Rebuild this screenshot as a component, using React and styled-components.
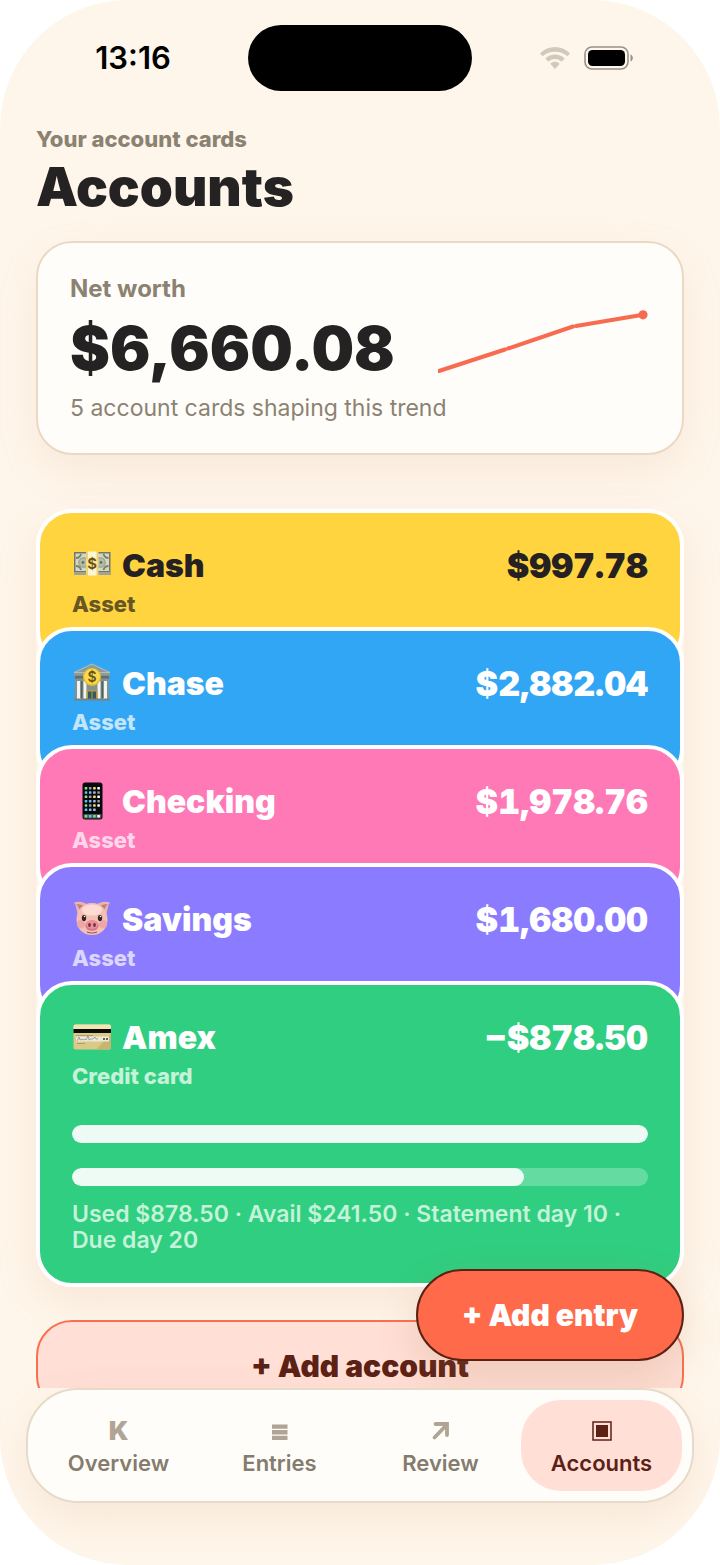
import React from "react";
import styled, { createGlobalStyle } from "styled-components";

const accounts = [
  { name: "Cash", kind: "Asset", balance: "$997.78", color: "#ffd43f", ink: "#252122", soft: "#665724", Icon: BanknoteIcon },
  { name: "Chase", kind: "Asset", balance: "$2,882.04", color: "#31a6f5", ink: "#ffffff", soft: "#c3e5fc", Icon: BankIcon },
  { name: "Checking", kind: "Asset", balance: "$1,978.76", color: "#ff79b7", ink: "#ffffff", soft: "#ffd5e9", Icon: PhoneIcon },
  { name: "Savings", kind: "Asset", balance: "$1,680.00", color: "#8b7bff", ink: "#ffffff", soft: "#dbd6ff", Icon: PigIcon },
  {
    name: "Amex",
    kind: "Credit card",
    balance: "−$878.50",
    color: "#30ce80",
    ink: "#ffffff",
    soft: "#c4f3da",
    Icon: CreditCardIcon,
    meters: [
      { label: "Statement paid", value: 100 },
      { label: "Credit used", value: 78.4 },
    ],
    note: "Used $878.50 · Avail $241.50 · Statement day 10 · Due day 20",
  },
];

const tabs = [
  { name: "Overview", Icon: OverviewIcon },
  { name: "Entries", Icon: EntriesIcon },
  { name: "Review", Icon: ReviewIcon },
  { name: "Accounts", Icon: AccountsIcon },
];

export default function App() {
  return (
    <>
      <GlobalStyle />
      <Phone>
        <StatusBar>
          <Clock>13:16</Clock>
          <Island />
          <Indicators>
            <WifiIcon />
            <BatteryIcon />
          </Indicators>
        </StatusBar>
        <Main>
          <Scroll>
            <header>
              <Eyebrow>Your account cards</Eyebrow>
              <Title>Accounts</Title>
            </header>
            <NetWorth>
              <NetLabel>Net worth</NetLabel>
              <NetRow>
                <NetAmount>$6,660.08</NetAmount>
                <Sparkline />
              </NetRow>
              <NetNote>5 account cards shaping this trend</NetNote>
            </NetWorth>
            <Stack>
              {accounts.map((account, i) => (
                <AccountCard key={account.name} account={account} covered={i < accounts.length - 1} />
              ))}
            </Stack>
            <AddAccount type="button">+ Add account</AddAccount>
          </Scroll>
          <AddEntry type="button">+ Add entry</AddEntry>
        </Main>
        <TabBar>
          {tabs.map(({ name, Icon }) => (
            <Tab key={name} href={`#${name.toLowerCase()}`} $active={name === "Accounts"}>
              <Icon />
              <span>{name}</span>
            </Tab>
          ))}
        </TabBar>
      </Phone>
    </>
  );
}

function AccountCard({ account, covered }) {
  const { name, kind, balance, color, ink, soft, Icon, meters, note } = account;
  return (
    <Card $color={color} $ink={ink} $covered={covered}>
      <CardHead>
        <Icon />
        <CardName>{name}</CardName>
        <Balance>{balance}</Balance>
      </CardHead>
      <Kind $soft={soft}>{kind}</Kind>
      {meters && (
        <Meters>
          {meters.map(({ label, value }) => (
            <Track key={label} role="progressbar" aria-label={label} aria-valuenow={value}>
              <Fill style={{ width: `${value}%` }} />
            </Track>
          ))}
        </Meters>
      )}
      {note && <Note $soft={soft}>{note}</Note>}
    </Card>
  );
}

/* status icons */

function WifiIcon() {
  return (
    <svg width="30" height="22" viewBox="0 0 30 22" fill="#d2c9bd" aria-hidden="true">
      <path d="M15 0C9.300 0 4.200 2.200.4 5.900c-.4.4-.4.9 0 1.200l1.700 1.700c.3.4.8.4 1.200 0C6.300 6 10.400 4.800 15 4.800S23.700 6 26.700 8.800c.4.4.9.4 1.200 0l1.700-1.700c.4-.3.4-.8 0-1.200C25.800 2.200 20.700 0 15 0z" />
      <path d="M15 7.500c-3.500 0-6.700 1.300-9.200 3.600-.4.300-.4.800 0 1.200l2.200 2c.3.400.8.400 1.200 0 1.600-1.500 3.400-2.200 5.800-2.200s4.200.7 5.800 2.200c.4.400.9.400 1.200 0l2.200-2c.4-.4.4-.9 0-1.200-2.500-2.300-5.700-3.600-9.200-3.600z" />
      <path d="M15 14.800c-1.600 0-3 .5-4.100 1.500-.4.300-.4.800 0 1.200l3.500 4c.4.400.8.400 1.200 0l3.500-4c.4-.4.4-.9 0-1.200-1.100-1-2.500-1.500-4.100-1.500z" />
    </svg>
  );
}

function BatteryIcon() {
  return (
    <svg width="50" height="24" viewBox="0 0 50 24" aria-hidden="true">
      <rect x="1" y="1" width="43" height="22" rx="7" fill="none" stroke="#96918b" strokeWidth="1.600" />
      <rect x="4" y="4" width="37" height="16" rx="4.500" />
      <path d="M46.500 8.500c1.500.6 2.300 1.900 2.300 3.500s-.8 2.900-2.300 3.500z" fill="#96918b" />
    </svg>
  );
}

/* net worth trend over the last four periods */

function Sparkline() {
  return (
    <svg width="212" height="76" viewBox="0 0 212 76" role="img" aria-label="Net worth trend">
      <g stroke="#f76c50" strokeWidth="4" strokeLinecap="round">
        <path d="M1 61L67 39.500" />
        <path d="M70 38.500L135 16.500" />
        <path d="M138 16L205 4.800" />
      </g>
      <circle cx="205" cy="4.800" r="4.600" fill="#f76c50" />
    </svg>
  );
}

/* account icons */

function BanknoteIcon() {
  return (
    <svg width="40" height="40" viewBox="0 0 40 40" aria-hidden="true">
      <rect x="2" y="7" width="36.500" height="23" fill="#73786a" />
      <rect x="2" y="27" width="36.500" height="3" fill="#a3a394" />
      <rect x="3.500" y="8.500" width="33.500" height="17.500" fill="#d5d8bf" />
      <path d="M4 13q4 0 5-4M4 21q4 0 5 4M36.500 13q-4 0-5-4M36.500 21q-4 0-5 4" stroke="#787e70" strokeWidth="1.800" fill="none" />
      <circle cx="11.500" cy="17.500" r="4.800" fill="#b3bca4" stroke="#858b77" strokeWidth=".8" />
      <circle cx="28.500" cy="17.500" r="4.800" fill="#b3bca4" stroke="#858b77" strokeWidth=".8" />
      <circle cx="11" cy="17.500" r="1.400" fill="#657462" />
      <circle cx="29" cy="17.500" r="1.400" fill="#657462" />
      <rect x="14" y="6.500" width="12.500" height="24" fill="#efd276" />
      <rect x="16" y="6.500" width="8.500" height="24" fill="#fff5cf" />
      <circle cx="20.200" cy="18" r="6" fill="#f9e48c" />
      <text x="20.200" y="23.500" textAnchor="middle" fontFamily="Inter, sans-serif" fontSize="15" fontWeight="600" fill="#66501a">$</text>
    </svg>
  );
}

function BankIcon() {
  return (
    <svg width="40" height="40" viewBox="0 0 40 40" aria-hidden="true">
      <path d="M20 1L38 9.500V13H2V9.500z" fill="#8e9c98" />
      <path d="M20 1L38 9.500H2z" fill="none" stroke="#b5bfb9" strokeWidth="1" />
      <rect x="3" y="12" width="34" height="25" fill="#83928e" />
      <rect x="3" y="13" width="34" height="2.500" fill="#5f716f" />
      <g fill="#f1f4f2">
        <rect x="5" y="18" width="3.500" height="18" />
        <rect x="11.500" y="18" width="3" height="18" />
        <rect x="25.500" y="18" width="3" height="18" />
        <rect x="31.500" y="18" width="3.500" height="18" />
      </g>
      <path d="M8.500 18h2v17h-2zM29.500 18h2v17h-2z" fill="#52625f" />
      <rect x="14.500" y="27" width="11" height="10" fill="#b69b4a" />
      <path d="M16 28.500h3.500V37H16zM20.500 28.500H24V37h-3.500z" fill="#345b61" />
      <rect x="2" y="35.500" width="36" height="2" fill="#76827a" />
      <circle cx="20" cy="14" r="9" fill="#e9bd29" />
      <circle cx="20" cy="13.500" r="7.800" fill="#fbd94c" />
      <text x="20" y="18.500" textAnchor="middle" fontFamily="Inter, sans-serif" fontSize="14" fontWeight="600" fill="#69551e">$</text>
    </svg>
  );
}

function PhoneIcon() {
  const dots = ["#8ee28a", "#ffffff", "#a7b9dd", "#969da7", "#54c8f0", "#9297a1", "#ffd67b", "#65c7f4"];
  return (
    <svg width="40" height="40" viewBox="0 0 40 40" aria-hidden="true">
      <rect x="10.500" y="1.500" width="20" height="37" rx="2.500" fill="#08090b" />
      {Array.from({ length: 23 }, (_, i) => (
        <rect key={i} x={12.700 + (i % 4) * 4.200} y={6 + Math.floor(i / 4) * 4.300} width="2.600" height="2.500" rx=".6" fill={dots[(i * 3) % 8]} />
      ))}
      <rect x="11.500" y="33" width="18" height="4.500" rx="1" fill="#4c555c" />
      {["#78e282", "#54c8f0", "#7be184", "#ffffff"].map((fill, i) => (
        <rect key={i} x={12.700 + i * 4.200} y="34" width="2.600" height="2.600" rx=".6" fill={fill} />
      ))}
    </svg>
  );
}

function PigIcon() {
  return (
    <svg width="40" height="40" viewBox="0 0 40 40" aria-hidden="true">
      <path d="M2 3.500c5-1.500 11-.5 14 3L7 17C4 13 5 7 2 3.500zM38 3.500c-5-1.500-11-.5-14 3L33 17c3-4 2-10 5-13.500z" fill="#edb3ad" />
      <path d="M4 5c4 0 7 1 9 3l-5 5c-1-3-1-6-4-8zM36 5c-4 0-7 1-9 3l5 5c1-3 1-6 4-8z" fill="#bd817d" />
      <path d="M20 4c9.500 0 15.500 7 15.500 16.500S29 36 20 36 4.500 30 4.500 20.500 10.500 4 20 4z" fill="#f4bfb4" />
      <ellipse cx="20" cy="11" rx="10" ry="5.500" fill="#ffdcd1" />
      <circle cx="9" cy="25" r="4" fill="#efa6a5" />
      <circle cx="31" cy="25" r="4" fill="#efa6a5" />
      <ellipse cx="12" cy="19" rx="2.200" ry="3.100" fill="#2d251d" />
      <ellipse cx="28" cy="19" rx="2.200" ry="3.100" fill="#2d251d" />
      <circle cx="12.500" cy="17.500" r=".8" fill="#ffffff" />
      <circle cx="28.500" cy="17.500" r=".8" fill="#ffffff" />
      <ellipse cx="20" cy="26.500" rx="6.700" ry="5.200" fill="#da7583" />
      <ellipse cx="20" cy="25.500" rx="6" ry="4.200" fill="#ea929a" />
      <ellipse cx="17.500" cy="26" rx="1.400" ry="2.100" fill="#73303d" />
      <ellipse cx="22.500" cy="26" rx="1.400" ry="2.100" fill="#73303d" />
      <path d="M15 33q5 2 10 0" stroke="#99565c" strokeWidth="1.200" fill="none" />
    </svg>
  );
}

function CreditCardIcon() {
  return (
    <svg width="40" height="40" viewBox="0 0 40 40" aria-hidden="true">
      <rect x="1.500" y="7.500" width="37.500" height="25" rx="2" fill="#dac989" />
      <path d="M1.500 9.500q0-2 2-2H37q2 0 2 2V12H1.500z" fill="#f0e5b5" />
      <rect x="1.500" y="12" width="37.500" height="4" fill="#0b0b0a" />
      <path d="M24 32.500L39 17v13.500q0 2-2 2z" fill="#c7b66f" />
      <rect x="4" y="19.500" width="33" height="5" fill="#eee8d2" />
      <path d="M5 24l2-4 1 3 2-1 1 1 2-1 1 1 2-4 1 4 2-1 2 0 2-2 1 2 2 0" stroke="#7b80ad" strokeWidth=".7" fill="none" />
      <path d="M31 22h2M34 22h2" stroke="#313345" strokeWidth="1.600" />
      <path d="M4 18.500h17M5 26.500h8" stroke="#9e925d" strokeWidth=".8" />
    </svg>
  );
}

/* tab icons */

function OverviewIcon() {
  return <KMark aria-hidden="true">K</KMark>;
}

function EntriesIcon() {
  return (
    <svg width="24" height="26" viewBox="0 0 24 26" fill="currentColor" aria-hidden="true">
      <path d="M4 6.500h15.500v4.300H4zM4 12.100h15.500v4.300H4zM4 17.700h15.500V22H4z" />
    </svg>
  );
}

function ReviewIcon() {
  return (
    <svg width="24" height="26" viewBox="0 0 24 26" fill="none" stroke="currentColor" strokeWidth="3.800" strokeLinecap="round" aria-hidden="true">
      <path d="M5.500 19.500L17.500 7" />
      <path d="M6.500 6H18v11" />
    </svg>
  );
}

function AccountsIcon() {
  return (
    <svg width="24" height="26" viewBox="0 0 24 26" aria-hidden="true">
      <rect x="3" y="4" width="18" height="18" fill="none" stroke="currentColor" strokeWidth="1.500" />
      <rect x="6" y="7" width="12" height="12" fill="currentColor" />
    </svg>
  );
}

const GlobalStyle = createGlobalStyle`
  *, *::before, *::after {
    box-sizing: border-box;
  }
  body {
    margin: 0;
    background: #ffffff;
    color: #252223;
    font-family: Inter, "Liberation Sans", sans-serif;
  }
  h1, p {
    margin: 0;
  }
  button {
    font-family: inherit;
    cursor: pointer;
  }
  svg {
    display: block;
    flex: none;
  }
`;

const Phone = styled.div`
  display: flex;
  flex-direction: column;
  height: 100vh;
  overflow: hidden;
  border-radius: 128px;
  background: #fff6eb;
`;

const StatusBar = styled.div`
  display: grid;
  grid-template-columns: 1fr 224px 1fr;
  align-items: center;
  padding-top: 25px;
`;

const Clock = styled.time`
  padding-left: 18px;
  color: #000000;
  font-size: 31px;
  font-weight: 600;
  line-height: 36px;
  text-align: center;
`;

const Island = styled.div`
  height: 66px;
  border-radius: 33px;
  background: #000000;
`;

const Indicators = styled.div`
  display: flex;
  align-items: center;
  justify-content: center;
  gap: 14px;
  padding-right: 18px;
`;

const Main = styled.main`
  position: relative;
  flex: 1;
  min-height: 0;
`;

const Scroll = styled.div`
  height: 100%;
  overflow: hidden;
  padding: 34px 36px 0;
`;

const Eyebrow = styled.p`
  color: #8c8272;
  font-size: 22px;
  font-weight: 800;
  line-height: 28px;
`;

const Title = styled.h1`
  margin-top: 4px;
  font-size: 53px;
  font-weight: 900;
  line-height: 60px;
`;

const NetWorth = styled.section`
  margin-top: 24px;
  padding: 32px 32px 30px;
  border: 2px solid #ead9c3;
  border-radius: 36px;
  background: #fffdf9;
  box-shadow: 0 16px 44px rgba(190, 120, 70, 0.1);
`;

const NetLabel = styled.p`
  color: #8c8272;
  font-size: 24px;
  font-weight: 700;
  line-height: 28px;
`;

const NetRow = styled.div`
  display: flex;
  align-items: center;
  justify-content: space-between;
  height: 90px;
`;

const NetAmount = styled.p`
  font-size: 60px;
  font-weight: 900;
  line-height: 72px;
`;

const NetNote = styled.p`
  color: #8c8272;
  font-size: 23px;
  line-height: 30px;
`;

const Stack = styled.section`
  margin-top: 54px;
  border-radius: 36px;
  box-shadow: 0 16px 44px rgba(190, 120, 70, 0.12);
`;

const Card = styled.article`
  position: relative;
  margin-bottom: ${({ $covered }) => ($covered ? "-40px" : "0")};
  padding: 32px 32px ${({ $covered }) => ($covered ? "45px" : "30px")};
  border: 4px solid #ffffff;
  border-radius: 36px;
  background: ${({ $color }) => $color};
  color: ${({ $ink }) => $ink};
`;

const CardHead = styled.div`
  display: flex;
  align-items: center;
  gap: 10px;
  height: 40px;
`;

const CardName = styled.span`
  flex: 1;
  font-size: 32px;
  font-weight: 900;
`;

const Balance = styled.span`
  font-size: 34px;
  font-weight: 900;
  font-variant-numeric: tabular-nums;
`;

const Kind = styled.p`
  margin-top: 5px;
  color: ${({ $soft }) => $soft};
  font-size: 22px;
  font-weight: 800;
  line-height: 28px;
`;

const Meters = styled.div`
  display: flex;
  flex-direction: column;
  gap: 25px;
  margin-top: 35px;
`;

const Track = styled.div`
  height: 18px;
  overflow: hidden;
  border-radius: 9px;
  background: #64dca1;
`;

const Fill = styled.div`
  height: 100%;
  border-radius: 9px;
  background: #eefbf4;
`;

const Note = styled.p`
  margin-top: 15px;
  color: ${({ $soft }) => $soft};
  font-size: 23px;
  font-weight: 600;
  line-height: 26px;
`;

const AddAccount = styled.button`
  display: block;
  width: 100%;
  height: 92px;
  margin-top: 33px;
  border: 2px solid #f9704f;
  border-radius: 36px;
  background: #ffdfd6;
  color: #5c2115;
  font-size: 30px;
  font-weight: 900;
`;

const AddEntry = styled.button`
  position: absolute;
  right: 36px;
  bottom: 27px;
  height: 92px;
  padding: 0 44px;
  border: 2px solid #5c2115;
  border-radius: 46px;
  background: #ff6b4a;
  color: #ffffff;
  font-size: 30px;
  font-weight: 900;
  box-shadow: 0 16px 40px rgba(170, 120, 70, 0.2);
`;

const TabBar = styled.nav`
  position: relative;
  display: grid;
  grid-template-columns: repeat(4, 1fr);
  margin: 0 26px 62px;
  padding: 10px;
  border: 2px solid #e8dac8;
  border-radius: 52px;
  background: #fffdf9;
  box-shadow: 0 16px 44px rgba(190, 120, 70, 0.12);
`;

const Tab = styled.a`
  display: flex;
  flex-direction: column;
  align-items: center;
  gap: 5px;
  padding: 18px 0 14px;
  border-radius: 40px;
  background: ${({ $active }) => ($active ? "#ffdfd6" : "transparent")};
  color: ${({ $active }) => ($active ? "#5c2115" : "#857c6d")};
  font-size: 22px;
  font-weight: 600;
  line-height: 28px;
  text-decoration: none;

  > :first-child {
    color: ${({ $active }) => ($active ? "#5c2115" : "#b0a494")};
  }
`;

const KMark = styled.span`
  font-size: 26px;
  font-weight: 900;
  line-height: 26px;
`;
